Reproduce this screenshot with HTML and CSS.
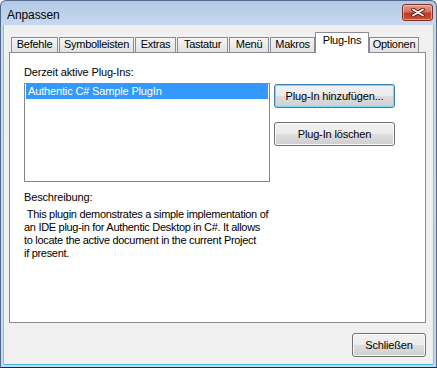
FILE: index.html
```html
<!DOCTYPE html>
<html lang="de">
<head>
<meta charset="utf-8">
<title>Anpassen</title>
<link rel="stylesheet" href="styles.css">
</head>
<body>
<div class="window">
  <div class="titlebar">
    <span class="title">Anpassen</span>
    <div class="close">
      <svg width="14" height="9" viewBox="0 0 14 9">
        <path d="M2 1.5 L12 7.5 M12 1.5 L2 7.5" stroke="#5a1c12" stroke-width="3.6" stroke-linecap="round" fill="none"/>
        <path d="M2 1.5 L12 7.5 M12 1.5 L2 7.5" stroke="#ffffff" stroke-width="1.8" stroke-linecap="round" fill="none"/>
      </svg>
    </div>
  </div>
  <div class="client">
    <div class="tabs">
      <div class="tab">Befehle</div>
      <div class="tab">Symbolleisten</div>
      <div class="tab">Extras</div>
      <div class="tab">Tastatur</div>
      <div class="tab">Menü</div>
      <div class="tab">Makros</div>
      <div class="tab active">Plug-Ins</div>
      <div class="tab">Optionen</div>
    </div>
    <div class="panel">
      <div class="main">
        <div class="left">
          <div class="label">Derzeit aktive Plug-Ins:</div>
          <div class="listbox">
            <div class="item selected">Authentic C# Sample PlugIn</div>
          </div>
        </div>
        <div class="buttons">
          <div class="btn default">Plug-In hinzufügen...</div>
          <div class="btn">Plug-In löschen</div>
        </div>
      </div>
      <div class="label desc-label">Beschreibung:</div>
      <p class="desc">&nbsp;This plugin demonstrates a simple implementation of<br>an IDE plug-in for Authentic Desktop in C#. It allows<br>to locate the active document in the current Project<br>if present.</p>
    </div>
    <div class="footer">
      <div class="btn close-btn">Schließen</div>
    </div>
  </div>
</div>
</body>
</html>
```
FILE: styles.css
```css
* { box-sizing: border-box; }
html, body { margin: 0; padding: 0; background: #ffffff; }
body {
  font-family: "Liberation Sans", Arial, sans-serif;
  font-size: 11px;
  color: #000;
}
.window {
  width: 437px;
  height: 368px;
  border: 1px solid #4f6a8c;
  border-bottom-color: #1b2a3a;
  border-radius: 6px 6px 0 0;
  background: linear-gradient(to bottom, #b3c9e4 0px, #c6d8ee 24px, #c9dbef 60px, #c3d8ee 100%);
  display: flex;
  flex-direction: column;
  overflow: hidden;
}
.titlebar {
  height: 24px;
  flex: none;
  display: flex;
  justify-content: space-between;
  align-items: flex-start;
  padding-left: 6px;
}
.title {
  font-size: 12px;
  line-height: 14px;
  margin-top: 7px;
  color: #000;
  letter-spacing: -0.1px;
}
.close {
  width: 31px;
  height: 17px;
  margin-top: 3px;
  margin-right: 3px;
  border: 1px solid #7a2f24;
  border-radius: 3px;
  background: linear-gradient(to bottom, #e6a093 0%, #d4705d 45%, #c23a22 55%, #cc5237 100%);
  box-shadow: inset 0 0 0 1px rgba(255, 210, 200, 0.55);
  display: flex;
  align-items: center;
  justify-content: center;
}
.client {
  flex: 1;
  margin: 0 3px 3px 3px;
  background: #f0f0f0;
  display: flex;
  flex-direction: column;
  box-shadow: 0 1px 0 #3fb3e0, -1px 0 0 #7fc4e6, 1px 0 0 #7fc4e6;
}
.tabs {
  flex: none;
  height: 27px;
  padding: 7px 0 0 7px;
  display: grid;
  grid-template-columns: 47px 75px 41px 51px 40px 45px 52px 50px;
  column-gap: 1px;
  align-items: end;
}
.tab {
  height: 15px;
  border: 1px solid #898c95;
  border-bottom: none;
  background: linear-gradient(to bottom, #f4f4f4 0%, #ececec 50%, #e2e2e2 100%);
  text-align: center;
  line-height: 12px;
  white-space: nowrap;
  letter-spacing: -0.25px;
  border-radius: 1px 1px 0 0;
}
.tab.active {
  height: 21px;
  margin: 0 -1px -1px -1px;
  background: #ffffff;
  position: relative;
  z-index: 1;
  line-height: 15px;
}
.panel {
  flex: none;
  height: 271px;
  margin: 0 7px 0 5px;
  border: 1px solid #898c95;
  background: #ffffff;
  padding: 13px 0 0 14px;
}
.main {
  display: flex;
  align-items: flex-start;
}
.label {
  line-height: 13px;
  letter-spacing: -0.15px;
}
.left .label { margin-bottom: 4px; }
.listbox {
  width: 246px;
  height: 99px;
  border: 1px solid #828790;
  background: #ffffff;
  padding: 0 1px;
}
.item {
  height: 15px;
  line-height: 15px;
  padding-left: 2px;
  letter-spacing: -0.15px;
}
.item.selected {
  background: #3399ff;
  color: #ffffff;
}
.buttons {
  display: flex;
  flex-direction: column;
  gap: 14px;
  margin-left: 4px;
  padding-top: 18px;
}
.btn {
  width: 121px;
  height: 24px;
  border: 1px solid #707070;
  border-radius: 3px;
  background: linear-gradient(to bottom, #f2f2f2 0%, #ebebeb 48%, #dddddd 52%, #cfcfcf 100%);
  box-shadow: inset 0 0 0 1px #fbfbfb;
  display: flex;
  align-items: center;
  justify-content: center;
  letter-spacing: -0.15px;
  white-space: nowrap;
}
.btn.default {
  border-color: #3c7fb1;
  box-shadow: inset 0 0 0 1px #7fd4f7;
}
.desc-label { margin-top: 9px; }
.desc {
  margin: 4px 0 0 0;
  line-height: 13px;
  letter-spacing: -0.3px;
}
.footer {
  flex: 1;
  display: flex;
  justify-content: flex-end;
  align-items: flex-start;
  padding: 10px 7px 0 0;
}
.close-btn { width: 74px; }
```
